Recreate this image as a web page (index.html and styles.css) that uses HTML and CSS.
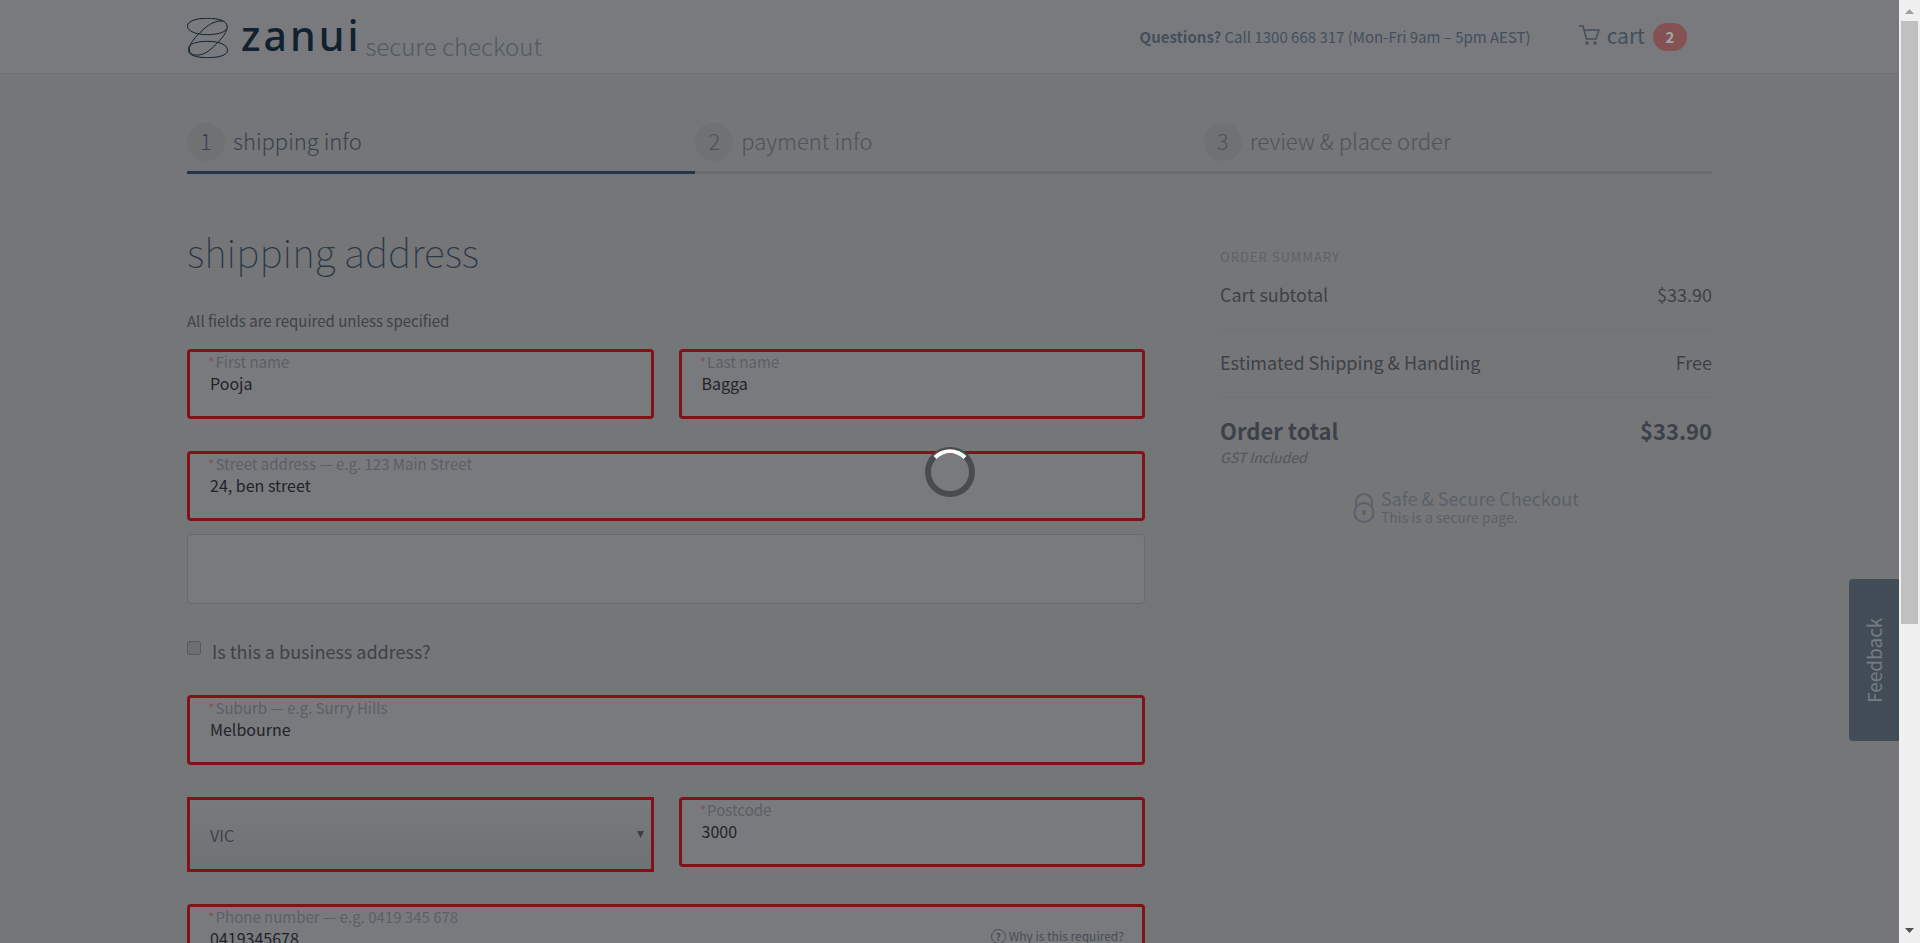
FILE: index.html
```html
<!DOCTYPE html>
<html lang="en">
<head>
<meta charset="utf-8">
<title>zanui secure checkout</title>
<link rel="stylesheet" href="styles.css">
</head>
<body>
<div class="page">
  <header class="header">
    <div class="container header-row">
      <a class="brand" href="#">
        <svg class="brand-mark" viewBox="0 0 122 120" aria-hidden="true">
          <path d="M1 25C1 8 28 1 60 1C96 1 120 8 120 27C120 46 92 76 68 96C52 109 38 112 24 111C10 110 5 100 7 88C10 72 32 48 56 28C76 12 94 7 106 10"/>
          <path d="M1 25C1 40 28 50 60 50C88 50 112 44 117 34"/>
          <path d="M6 86C12 75 34 70 62 70C96 70 121 80 121 97C121 112 94 119 62 119C28 119 4 112 4 97C4 93 5 89 6 86"/>
        </svg>
        <span class="brand-name">zanui</span>
        <span class="brand-sub">secure checkout</span>
      </a>
      <div class="header-info">
        <p class="questions"><strong>Questions?</strong> Call 1300 668 317 (Mon-Fri 9am – 5pm AEST)</p>
        <a class="cart" href="#">
          <svg class="cart-icon" viewBox="0 0 21 20" aria-hidden="true">
            <path d="M0 1H4L7.500 14H17L20 5H5"/>
            <circle cx="8" cy="18" r="1"/><circle cx="16" cy="18" r="1"/>
          </svg>
          <span class="cart-label">cart</span>
          <span class="badge">2</span>
        </a>
      </div>
    </div>
  </header>

  <div class="container">
    <ol class="steps">
      <li class="step step-active"><span class="step-number">1</span><span>shipping info</span></li>
      <li class="step"><span class="step-number">2</span><span>payment info</span></li>
      <li class="step"><span class="step-number">3</span><span>review &amp; place order</span></li>
    </ol>

    <div class="columns">
      <main class="form-column">
        <h1 class="title">shipping address</h1>
        <p class="note">All fields are required unless specified</p>
        <form class="form">
          <div class="row">
            <div class="field"><label class="label" for="first"><span class="star">*</span>First name</label><input class="input" id="first" type="text" value="Pooja"></div>
            <div class="field"><label class="label" for="last"><span class="star">*</span>Last name</label><input class="input" id="last" type="text" value="Bagga"></div>
          </div>
          <div class="row row-tight">
            <div class="field"><label class="label" for="street"><span class="star">*</span>Street address — e.g. 123 Main Street</label><input class="input" id="street" type="text" value="24, ben street"></div>
          </div>
          <div class="row">
            <input class="input-plain" type="text" aria-label="Street address line 2">
          </div>
          <div class="check-row">
            <input class="checkbox" id="business" type="checkbox"><label for="business">Is this a business address?</label>
          </div>
          <div class="row">
            <div class="field"><label class="label" for="suburb"><span class="star">*</span>Suburb — e.g. Surry Hills</label><input class="input" id="suburb" type="text" value="Melbourne"></div>
          </div>
          <div class="row">
            <div class="select-wrap">
              <select class="select" aria-label="State"><option>VIC</option></select>
              <svg class="select-arrow" viewBox="0 0 7 7" aria-hidden="true"><path d="M0 0H7L3.500 7Z"/></svg>
            </div>
            <div class="field"><label class="label" for="postcode"><span class="star">*</span>Postcode</label><input class="input" id="postcode" type="text" value="3000"></div>
          </div>
          <div class="row">
            <div class="field field-phone">
              <div class="phone-main"><label class="label" for="phone"><span class="star">*</span>Phone number — e.g. 0419 345 678</label><input class="input" id="phone" type="text" value="0419345678"></div>
              <a class="why" href="#"><span class="why-icon">?</span>Why is this required?</a>
            </div>
          </div>
        </form>
      </main>

      <aside class="summary">
        <h2 class="summary-title">ORDER SUMMARY</h2>
        <dl class="lines">
          <div class="line"><dt>Cart subtotal</dt><dd>$33.90</dd></div>
          <div class="line"><dt>Estimated Shipping &amp; Handling</dt><dd>Free</dd></div>
          <div class="line line-total"><dt>Order total</dt><dd>$33.90</dd></div>
        </dl>
        <p class="gst">GST Included</p>
        <div class="secure">
          <svg class="lock" viewBox="0 0 22 30" aria-hidden="true">
            <path d="M3 13V9A8 8 0 0 1 19 9V13"/>
            <circle cx="11" cy="19.500" r="9.500"/>
            <path class="keyhole" d="M11 17V22"/>
          </svg>
          <div><p class="secure-title">Safe &amp; Secure Checkout</p><p class="secure-text">This is a secure page.</p></div>
        </div>
      </aside>
    </div>
  </div>

  <button class="feedback" type="button">Feedback</button>
  <svg class="spinner" viewBox="0 0 50 50" role="img" aria-label="Loading">
    <circle class="spinner-ring" cx="25" cy="25" r="22"/>
    <path class="spinner-arc" d="M10 10.500A21 21 0 0 1 40 10.500"/>
  </svg>
</div>
<div class="scrollbar" aria-hidden="true">
  <svg class="scroll-arrow scroll-up" viewBox="0 0 9 5"><path d="M0 5L4.500 0L9 5Z"/></svg>
  <div class="track"><div class="thumb"></div></div>
  <svg class="scroll-arrow" viewBox="0 0 9 5"><path d="M0 0H9L4.500 5Z"/></svg>
</div>
</body>
</html>
```

FILE: styles.css
```css
* { box-sizing: border-box; }

body {
  margin: 0;
  height: 100vh;
  display: flex;
  overflow: hidden;
  background: #757677;
  color: #3c4249;
  font: 18px/28px "Noto Sans CJK SC", "Noto Sans", sans-serif;
}

p, h1, h2, dl, dd, ol { margin: 0; padding: 0; }
a { color: inherit; text-decoration: none; }
input, select, button { font: inherit; color: inherit; margin: 0; }

.page { position: relative; flex: 1; min-width: 0; overflow: hidden; }
.container { width: 100%; max-width: 1525px; margin: 0 auto; }

.header { background: #797a7e; border-bottom: 1px solid #707174; }
.header-row { display: flex; justify-content: space-between; height: 73px; }
.brand { display: flex; align-items: flex-start; color: #11222e; }
.brand-mark { width: 41px; height: 40px; margin-top: 18px; fill: none; stroke: currentColor; stroke-width: 3; }
.brand-name { margin-left: 13px; font: 500 41px/70px "Noto Sans", sans-serif; letter-spacing: 3px; }
.brand-sub { margin-left: 4px; padding-top: 26px; color: #4f5a63; font-size: 24px; font-weight: 300; line-height: 40px; }
.header-info { display: flex; align-items: center; gap: 48px; padding-right: 25px; color: #434f5a; }
.questions { font-size: 15px; }
.cart { display: flex; align-items: center; }
.cart-icon { width: 21px; height: 20px; margin: 0 7px 4px 0; fill: none; stroke: currentColor; stroke-width: 1.5; }
.cart-label { padding-bottom: 4px; font-size: 21px; line-height: 24px; }
.badge { width: 34px; height: 28px; margin-left: 8px; border-radius: 14px; background: #855254; color: #a5a5a9; font-size: 15px; font-weight: 700; text-align: center; }

.steps { display: flex; margin-top: 49px; list-style: none; }
.step { flex: 1; display: flex; gap: 8px; padding-bottom: 10px; border-bottom: 3px solid #6a6b6c; color: #4c535c; font-size: 22px; font-weight: 300; line-height: 35px; }
.step-active { border-color: #26364a; color: #36424f; }
.step-number { width: 38px; height: 38px; border-radius: 50%; background: #707173; text-align: center; }

.columns { display: grid; grid-template-columns: minmax(0, 958fr) minmax(0, 492fr); gap: 75px; }
.title { margin-top: 47px; color: #2a3848; font-size: 39px; font-weight: 100; line-height: 60px; }
.note { margin-top: 30px; font-size: 15px; line-height: 20px; }

.form { display: flex; flex-direction: column; margin-top: 18px; }
.row { display: grid; grid-auto-flow: column; grid-auto-columns: minmax(0, 1fr); align-items: start; gap: 25px; margin-bottom: 32px; }
.row-tight { margin-bottom: 13px; }
.field { display: flex; flex-direction: column; padding: 1px 18px 21px; border: 3px solid #7f1317; border-radius: 4px; background: #797a7e; }
.label { color: #5c5f64; font-size: 15px; line-height: 18px; }
.star { margin-right: 1px; color: #7d565b; font-size: 14px; line-height: 0; }
.input { width: 100%; height: 24px; padding: 0 2px; border: 0; outline: 0; background: transparent; color: #212327; font-size: 16px; line-height: 24px; }
.input-plain { width: 100%; height: 70px; padding: 0 20px; border: 1px solid #69696b; border-radius: 4px; background: #797a7e; }

.check-row { display: flex; align-items: flex-start; gap: 11px; margin: 1px 0 30px; }
.checkbox { appearance: none; width: 14px; height: 14px; margin-top: 4px; border: 1px solid #57585a; border-radius: 2px; background: #6d6e72; }

.select-wrap { position: relative; }
.select { display: block; appearance: none; width: 100%; height: 75px; padding: 0 20px; border: 3px solid #7f1317; border-radius: 0; background: linear-gradient(#797a7e, #707174); font-size: 16px; }
.select-arrow { position: absolute; right: 10px; top: 34px; width: 7px; height: 7px; fill: #3c4046; pointer-events: none; }

.field-phone { flex-direction: row; align-items: flex-start; }
.phone-main { flex: 1; display: flex; flex-direction: column; }
.why { display: flex; align-items: center; gap: 3px; margin-top: 14px; color: #434d57; font-size: 12px; line-height: 28px; }
.why-icon { width: 15px; height: 15px; border: 1px solid currentColor; border-radius: 50%; font-size: 10px; font-weight: 700; line-height: 13px; text-align: center; }

.summary { padding-top: 76px; }
.summary-title { color: #5b636b; font-size: 13px; font-weight: 400; line-height: 14px; letter-spacing: 1px; }
.line { display: flex; justify-content: space-between; padding: 18px 0 21px; border-bottom: 1px solid #707172; }
.line:first-child { padding-top: 16px; }
.line-total { padding-bottom: 0; border: 0; font-size: 22px; font-weight: 700; }
.gst { padding-top: 1px; color: #525559; font-size: 14px; font-style: italic; line-height: 24px; }
.secure { display: flex; justify-content: center; align-items: flex-end; gap: 6px; margin-top: 18px; color: #59626a; }
.lock { width: 22px; height: 30px; margin-bottom: 2px; fill: none; stroke: currentColor; stroke-width: 2; }
.keyhole { stroke-width: 3; }
.secure-title { line-height: 22px; }
.secure-text { font-size: 14px; line-height: 16px; }

.feedback { position: absolute; right: 0; top: 579px; width: 50px; height: 162px; padding: 0; border: 0; border-radius: 0 4px 4px 0; background: #414c57; color: #777c82; font-size: 19px; writing-mode: vertical-rl; transform: rotate(180deg); }
.spinner { position: absolute; left: 50%; top: 50%; width: 50px; height: 50px; margin: -25px; fill: none; }
.spinner-ring { stroke: #4a4b4d; stroke-width: 6; }
.spinner-arc { stroke: #fff; stroke-width: 4; }

.scrollbar { display: flex; flex-direction: column; align-items: center; width: 21px; padding: 9px 2px 10px; background: #f0f0f0; }
.scroll-arrow { width: 9px; height: 5px; fill: #505050; }
.scroll-up { fill: #a0a0a0; }
.track { flex: 1; width: 100%; margin: 7px 0; }
.thumb { height: 67%; background: #c0c0c0; }
```
